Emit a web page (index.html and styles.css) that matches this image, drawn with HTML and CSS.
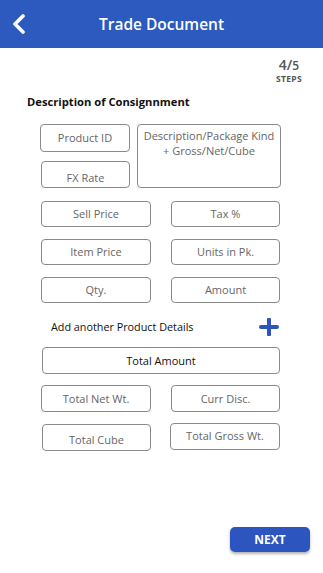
FILE: index.html
```html
<!DOCTYPE html>
<html>
<head>
<meta charset="utf-8">
<link rel="stylesheet" href="styles.css">
</head>
<body>
<header class="topbar">
  <svg class="back" width="14" height="20" viewBox="0 0 14 20"><path d="M11 2 L3 10 L11 18" fill="none" stroke="#fff" stroke-width="3.6" stroke-linecap="round" stroke-linejoin="round"/></svg>
  <div class="title">Trade Document</div>
</header>
<div class="steps">
  <div class="count">4/<span class="of">5</span></div>
  <div class="label">STEPS</div>
</div>
<div class="section-title">Description of Consignnment</div>
<div class="top-grid">
  <div class="field f-pid">Product ID</div>
  <div class="field f-fx">FX Rate</div>
  <div class="field f-desc">Description/Package Kind<br>+ Gross/Net/Cube</div>
</div>
<div class="pair-grid">
  <div class="field">Sell Price</div>
  <div class="field">Tax %</div>
  <div class="field">Item Price</div>
  <div class="field">Units in Pk.</div>
  <div class="field">Qty.</div>
  <div class="field">Amount</div>
</div>
<div class="add-row">
  <span>Add another Product Details</span>
  <svg class="plus" width="20" height="18" viewBox="0 0 20 18"><path d="M10 1.5 V16.5 M2 9 H18" stroke="#2d55bd" stroke-width="4" stroke-linecap="round"/></svg>
</div>
<div class="field total-field">Total Amount</div>
<div class="pair-grid pair-bottom">
  <div class="field">Total Net Wt.</div>
  <div class="field">Curr Disc.</div>
  <div class="field f-cube">Total Cube</div>
  <div class="field f-gross">Total Gross Wt.</div>
</div>
<div class="footer">
  <button class="next">NEXT</button>
</div>
</body>
</html>
```
FILE: styles.css
```css
html, body {
  margin: 0;
  padding: 0;
  background: #fff;
  font-family: "Open Sans", "Liberation Sans", sans-serif;
  width: 323px;
  height: 573px;
  overflow: hidden;
}
.topbar {
  height: 48px;
  background: #2c5abe;
  display: flex;
  align-items: center;
  position: relative;
}
.back {
  position: absolute;
  left: 12px;
  top: 14px;
}
.title {
  flex: 1;
  text-align: center;
  color: #fff;
  font-size: 15.5px;
  font-weight: 600;
}
.steps {
  margin-top: 10px;
  padding-right: 21px;
  text-align: right;
  color: #555;
  line-height: 1;
}
.count {
  font-size: 14px;
  font-weight: 600;
  margin-right: 3px;
}
.count .of {
  font-size: 12px;
}
.label {
  font-size: 8.5px;
  font-weight: 700;
  margin-top: 3px;
  letter-spacing: 0.3px;
}
.section-title {
  margin: 10px 0 0 27px;
  font-size: 11.2px;
  font-weight: 700;
  color: #111;
}
.field {
  border: 1px solid #8a8a8a;
  border-radius: 4px;
  box-sizing: border-box;
  height: 27px;
  display: flex;
  align-items: center;
  justify-content: center;
  text-align: center;
  font-size: 11px;
  color: #666;
}
.top-grid {
  margin: 15px 0 0 40px;
  display: grid;
  grid-template-columns: 90px 144px;
  grid-template-rows: 28px 27px;
  column-gap: 7px;
  row-gap: 9px;
}
.f-pid { grid-column: 1; grid-row: 1; height: 28px; }
.f-fx { grid-column: 1; grid-row: 2; margin-left: 1px; padding-top: 6px; }
.f-desc {
  grid-column: 2;
  grid-row: 1 / 3;
  height: 64px;
  align-items: flex-start;
  padding-top: 3px;
  line-height: 15px;
}
.pair-grid {
  margin: 13px 0 0 41px;
  display: grid;
  grid-template-columns: 110px 109px;
  column-gap: 20px;
  row-gap: 12px;
}
.pair-grid .field { height: 26px; }
.add-row {
  margin: 15px 0 0 51px;
  width: 228px;
  display: flex;
  align-items: center;
  justify-content: space-between;
  font-size: 10.8px;
  color: #111;
  height: 18px;
}
.total-field {
  margin: 11px 0 0 42px;
  width: 238px;
  color: #111;
  font-size: 11px;
}
.pair-bottom { margin-top: 11px; }
.pair-bottom .field { height: 27px; }
.f-cube { margin-left: 1px; padding-top: 4px; }
.f-gross { margin-left: -1px; margin-top: -1px; padding-bottom: 2px; }
.footer {
  position: absolute;
  left: 230px;
  top: 527px;
}
.next {
  width: 80px;
  height: 25px;
  border: none;
  border-radius: 5px;
  background: #2c55c0;
  color: #fff;
  font-family: "Open Sans", "Liberation Sans", sans-serif;
  font-weight: 700;
  font-size: 12px;
  box-shadow: 0 2px 3px rgba(0,0,0,0.3);
  padding: 0;
}
```
